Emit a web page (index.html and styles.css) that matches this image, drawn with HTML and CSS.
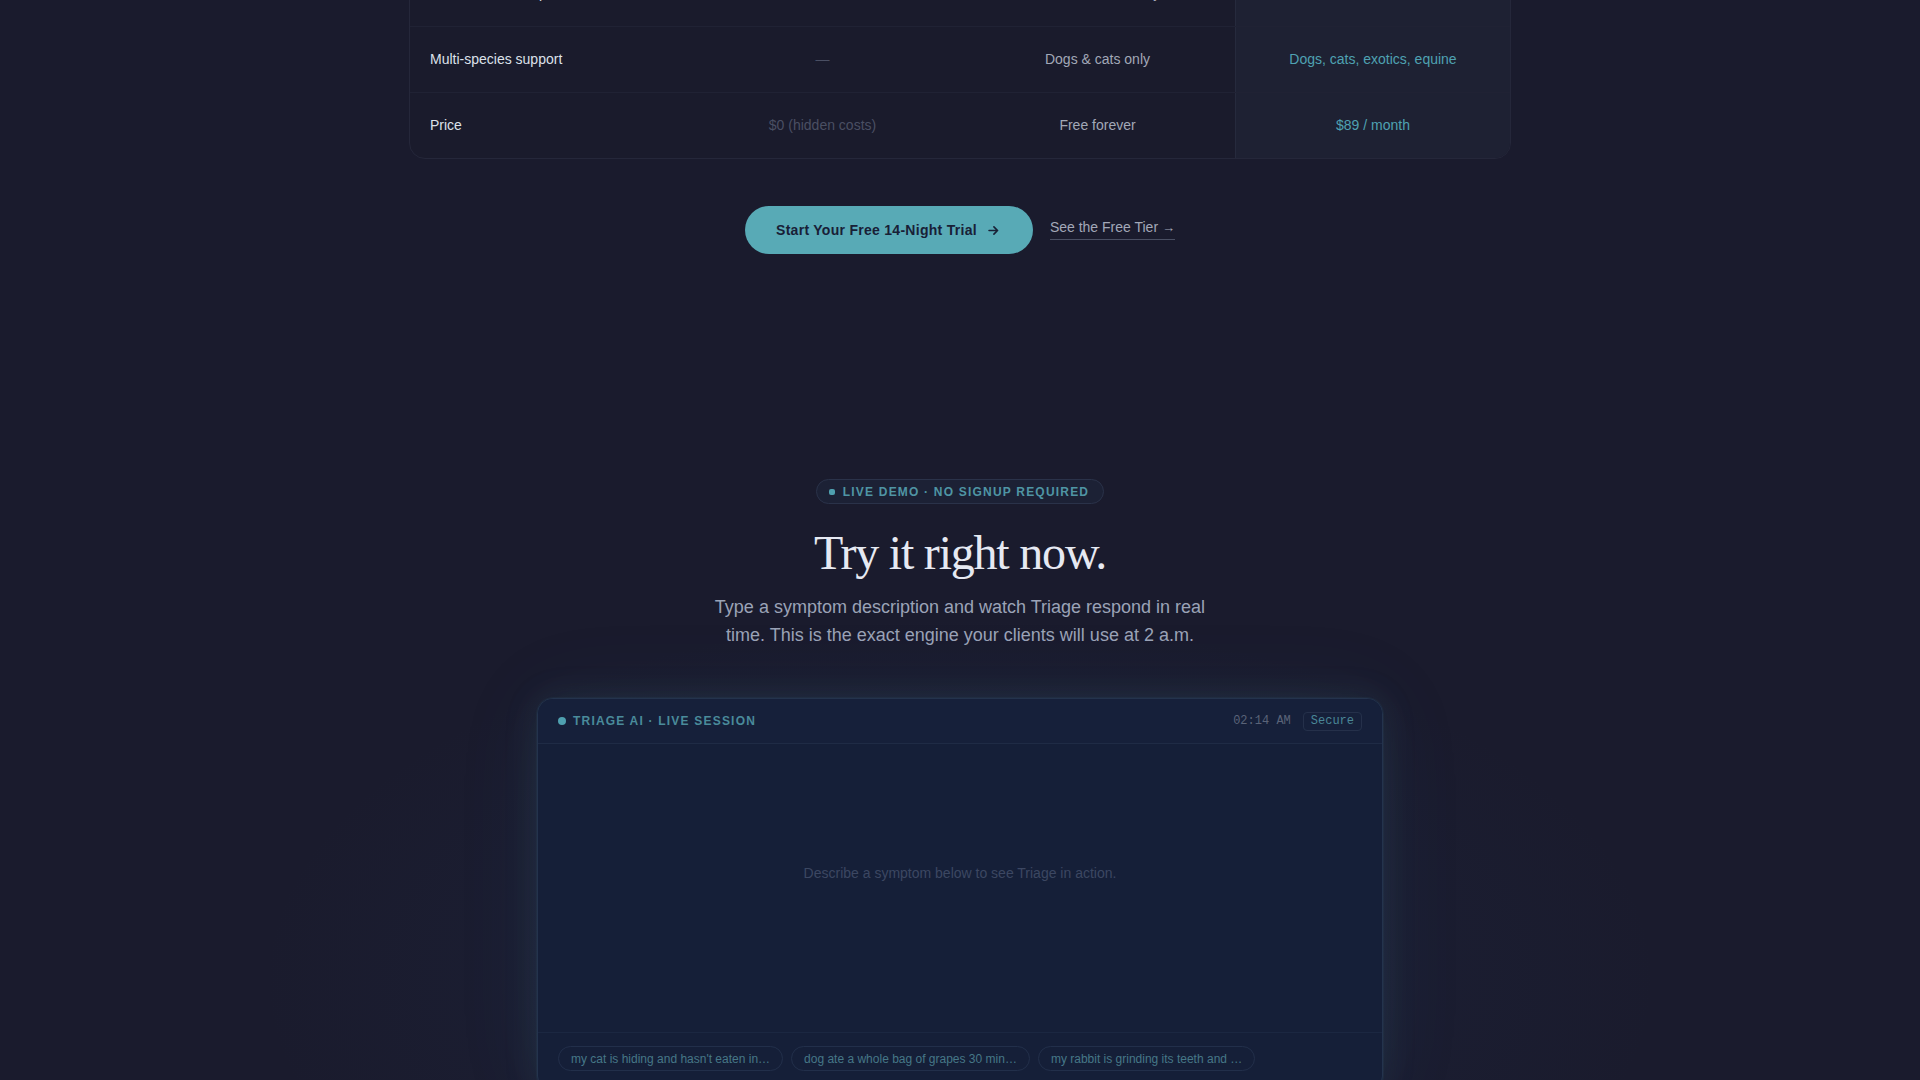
FILE: index.html
```html
<!DOCTYPE html>
<html lang="en">
<head>
<meta charset="utf-8">
<title>Triage</title>
<link rel="stylesheet" href="styles.css">
</head>
<body>
<main class="page">
  <section class="compare">
    <div class="table">
      <div class="row">
        <div class="cell label">Human vet backup</div>
        <div class="cell dim">—</div>
        <div class="cell mid">Business hours only</div>
        <div class="cell hl">Included</div>
      </div>
      <div class="row">
        <div class="cell label">Multi-species support</div>
        <div class="cell dim">—</div>
        <div class="cell mid">Dogs &amp; cats only</div>
        <div class="cell hl">Dogs, cats, exotics, equine</div>
      </div>
      <div class="row last">
        <div class="cell label">Price</div>
        <div class="cell dim">$0 (hidden costs)</div>
        <div class="cell mid">Free forever</div>
        <div class="cell hl">$89 / month</div>
      </div>
    </div>
    <div class="cta">
      <a class="btn-primary" href="#">Start Your Free 14-Night Trial
        <svg class="btn-arrow" viewBox="0 0 16 16" width="13" height="13" aria-hidden="true"><path d="M2.5 8h10.5M8.5 3.5 13 8l-4.5 4.5" fill="none" stroke="currentColor" stroke-width="2" stroke-linecap="round" stroke-linejoin="round"/></svg>
      </a>
      <a class="link-secondary" href="#">See the Free Tier <span class="link-arrow">→</span></a>
    </div>
  </section>

  <section class="demo">
    <div class="badge"><span class="badge-dot"></span>LIVE DEMO · NO SIGNUP REQUIRED</div>
    <h2 class="demo-title">Try it right now.</h2>
    <p class="demo-sub">Type a symptom description and watch Triage respond in real time. This is the exact engine your clients will use at 2 a.m.</p>

    <div class="card">
      <div class="card-head">
        <div class="session"><span class="session-dot"></span>TRIAGE AI · LIVE SESSION</div>
        <div class="head-right">
          <span class="clock">02:14 AM</span>
          <span class="secure">Secure</span>
        </div>
      </div>
      <div class="card-body">
        <p class="placeholder">Describe a symptom below to see Triage in action.</p>
      </div>
      <div class="chips">
        <span class="chip">my cat is hiding and hasn't eaten in…</span>
        <span class="chip">dog ate a whole bag of grapes 30 min…</span>
        <span class="chip">my rabbit is grinding its teeth and …</span>
      </div>
    </div>
  </section>
</main>
</body>
</html>
```

FILE: styles.css
```css
* { box-sizing: border-box; }

html, body {
  margin: 0;
  padding: 0;
  background: #1a1b2d;
  font-family: "Liberation Sans", Arial, sans-serif;
  overflow: hidden;
}

.page {
  margin-top: -40px;
  min-height: 1200px;
  background:
    radial-gradient(ellipse 1000px 520px at 50% 1020px, rgba(40, 70, 120, 0.16), rgba(26, 27, 45, 0) 70%),
    #1a1b2d;
}

/* comparison table */
.compare {
  display: flex;
  flex-direction: column;
  align-items: center;
}

.table {
  width: 1102px;
  border: 1px solid #25273a;
  border-radius: 16px;
  overflow: hidden;
  background: #1a1b2c;
}

.row {
  display: grid;
  grid-template-columns: repeat(4, 1fr);
  border-bottom: 1px solid #202234;
}
.row.last { border-bottom: none; }

.cell {
  padding: 22px 20px;
  font-size: 14px;
  line-height: 21px;
  text-align: center;
  white-space: nowrap;
}
.cell.label { text-align: left; color: #dde1ea; }
.cell.dim { color: #4a4f63; }
.cell.mid { color: #a2a8b7; }
.cell.hl {
  background: #1e2133;
  border-left: 1px solid #262a3d;
  color: #4fa2b2;
}

.cta {
  margin-top: 47px;
  display: flex;
  align-items: center;
  gap: 17px;
}

.btn-primary {
  height: 48px;
  padding: 0 33px 0 31px;
  border-radius: 999px;
  background: #58aab6;
  color: #182036;
  font-weight: 700;
  font-size: 14px;
  letter-spacing: 0.02em;
  text-decoration: none;
  display: flex;
  align-items: center;
  gap: 10px;
}
.btn-arrow { display: block; }

.link-secondary {
  color: #a3a8b8;
  font-size: 14px;
  text-decoration: none;
  padding-bottom: 4px;
  border-bottom: 1px solid #4a4f63;
  margin-top: -2px;
}
.link-arrow { font-size: 13px; }

/* demo */
.demo {
  margin-top: 225px;
  display: flex;
  flex-direction: column;
  align-items: center;
}

.badge {
  height: 25px;
  padding: 0 14px 0 12px;
  border: 1px solid #2a3249;
  border-radius: 999px;
  background: #1c2135;
  color: #4f95a4;
  font-size: 12px;
  font-weight: 700;
  letter-spacing: 0.1em;
  display: flex;
  align-items: center;
  gap: 8px;
}
.badge-dot {
  width: 6px;
  height: 6px;
  border-radius: 2px;
  background: #4f9fae;
}

.demo-title {
  margin: 22px 0 0;
  font-family: "Liberation Serif", "Times New Roman", serif;
  font-weight: 400;
  font-size: 48px;
  line-height: 53px;
  letter-spacing: -0.025em;
  color: #e6e9f2;
}

.demo-sub {
  margin: 14px 0 0;
  max-width: 520px;
  text-align: center;
  font-size: 18px;
  line-height: 28px;
  color: #9ba3b7;
}

.card {
  margin-top: 49px;
  width: 846px;
  border: 1px solid #24334d;
  border-radius: 16px;
  background: #151f38;
  box-shadow: 0 0 0 1px rgba(79, 163, 179, 0.06), 0 0 36px rgba(79, 163, 179, 0.12), 0 0 90px rgba(60, 110, 160, 0.08);
  overflow: hidden;
}

.card-head {
  height: 45px;
  padding: 0 20px;
  display: flex;
  align-items: center;
  justify-content: space-between;
  border-bottom: 1px solid #1f2b45;
  background: #16203a;
}

.session {
  display: flex;
  align-items: center;
  gap: 7px;
  color: #4a8b9b;
  font-size: 12px;
  font-weight: 700;
  letter-spacing: 0.1em;
}
.session-dot {
  width: 8px;
  height: 8px;
  border-radius: 50%;
  background: #4fa0b0;
}

.head-right {
  display: flex;
  align-items: center;
  gap: 12px;
}
.clock {
  font-family: "Liberation Mono", "Courier New", monospace;
  font-size: 12px;
  color: #5a6378;
}
.secure {
  height: 19px;
  padding: 0 7px;
  display: flex;
  align-items: center;
  border: 1px solid #25304a;
  border-radius: 4px;
  font-family: "Liberation Mono", "Courier New", monospace;
  font-size: 12px;
  color: #4a8797;
}

.card-body {
  height: 288px;
  padding-bottom: 30px;
  display: flex;
  align-items: center;
  justify-content: center;
}
.placeholder {
  margin: 0;
  font-size: 14px;
  color: #3c4762;
}

.chips {
  border-top: 1px solid #1b2741;
  padding: 13px 20px 20px;
  display: flex;
  gap: 8px;
}
.chip {
  height: 25px;
  padding: 0 12px;
  display: flex;
  align-items: center;
  border: 1px solid #222f4a;
  border-radius: 999px;
  font-size: 12px;
  color: #467787;
  white-space: nowrap;
}
```
